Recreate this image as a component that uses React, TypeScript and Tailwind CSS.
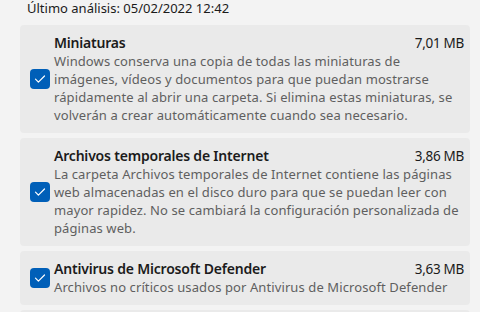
import React from "react"

type Item = {
  title: string
  size: string
  lines: string[]
}

const items: Item[] = [
  {
    title: "Miniaturas",
    size: "7,01 MB",
    lines: [
      "Windows conserva una copia de todas las miniaturas de",
      "imágenes, vídeos y documentos para que puedan mostrarse",
      "rápidamente al abrir una carpeta. Si elimina estas miniaturas, se",
      "volverán a crear automáticamente cuando sea necesario.",
    ],
  },
  {
    title: "Archivos temporales de Internet",
    size: "3,86 MB",
    lines: [
      "La carpeta Archivos temporales de Internet contiene las páginas",
      "web almacenadas en el disco duro para que se puedan leer con",
      "mayor rapidez. No se cambiará la configuración personalizada de",
      "páginas web.",
    ],
  },
  {
    title: "Antivirus de Microsoft Defender",
    size: "3,63 MB",
    lines: ["Archivos no críticos usados por Antivirus de Microsoft Defender"],
  },
]

function CheckBox() {
  return (
    <div className="flex h-5 w-5 shrink-0 items-center justify-center rounded-[4px] bg-[#005fb8]">
      <svg width="12" height="12" viewBox="0 0 12 12" fill="none">
        <path d="M1.5 6.2 L4.4 9.1 L10.5 3" stroke="#fff" strokeWidth="1.2" strokeLinecap="round" strokeLinejoin="round" />
      </svg>
    </div>
  )
}

function CleanupCard({ item }: { item: Item }) {
  return (
    <div className="flex items-center gap-1 rounded-[4px] bg-[#eaeaea] py-[9px] pl-[10px] pr-[6px]">
      <CheckBox />
      <div className="min-w-0 flex-1">
        <div className="flex items-center justify-between text-[14px]">
          <span className="font-semibold tracking-[-0.2px] text-[#1b1b1b]">{item.title}</span>
          <span className="text-[13.5px] tracking-[-0.3px] text-[#1b1b1b]">{item.size}</span>
        </div>
        <div className="text-[13px] tracking-[0.1px] text-[#5f5f5f]">
          {item.lines.map((l) => (
            <div key={l} className="whitespace-nowrap">{l}</div>
          ))}
        </div>
      </div>
    </div>
  )
}

export default function App() {
  return (
    <div
      className="h-[312px] w-[480px] overflow-hidden bg-[#f3f3f3] text-[13px] leading-[18px]"
      style={{ fontFamily: '"Segoe UI", "Noto Sans", sans-serif' }}
    >
      <div className="-mt-[1px] pl-[27px] text-[13px] leading-[19px] text-[#1b1b1b]">Último análisis: 05/02/2022 12:42</div>
      <div className="ml-[20px] mr-[10px] mt-[7px] flex flex-col gap-[5px]">
        {items.map((it) => (
          <CleanupCard key={it.title} item={it} />
        ))}
        <div className="h-[40px] rounded-[4px] bg-[#eaeaea]" />
      </div>
    </div>
  )
}
